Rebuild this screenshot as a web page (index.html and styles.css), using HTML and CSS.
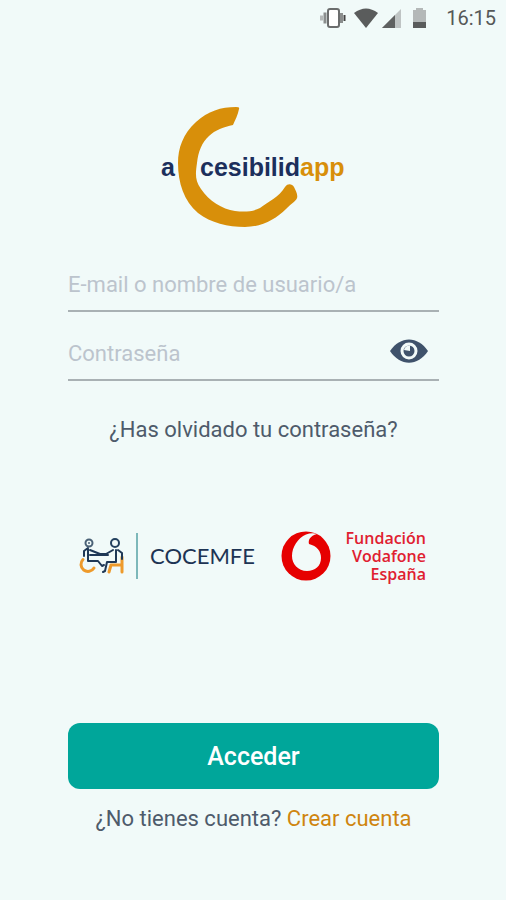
FILE: index.html
```
<!DOCTYPE html>
<html lang=es>
<head>
  <meta charset=utf-8>
  <title>accesibilidapp</title>
  <meta name=viewport content='width=device-width, initial-scale=1.0'>
  <link rel="stylesheet" href="styles.css">
</head>
<body>
  <header class=status>
    <svg class=status-icons width=108 height=22 viewBox="0 0 108 22" aria-hidden=true>
      <!-- vibrate -->
      <path d="M5 5.500v11M21.500 6v10" stroke=#8a8d8d stroke-width=3 />
      <path d="M1.500 8.500v5" stroke=#b4b8b8 stroke-width=3 />
      <rect x=8 y=2 width=11 height=18 rx=2 fill=#fff stroke=#6b6d6d stroke-width=2 />
      <path d="M24.500 8v6" stroke=#444 stroke-width=2 />
      <!-- wifi -->
      <path d="M34 6q12-9 24 0L46 21z" fill=#5a5c5c />
      <!-- signal -->
      <path d="M62 21 81 2v19z" fill=#bfc4c4 />
      <path d="M62 21 75 8v13z" fill=#5f6161 />
      <!-- battery -->
      <path d="M93 3h3V1h7v2h3v13H93z" fill=#b4b8b8 />
      <path d="M93 15h13v6H93z" fill=#5a5c5c />
    </svg>
    <time>16:15</time>
  </header>

  <main class=login>
    <svg class=brand viewBox="160 105 188 124" role=img aria-label=accesibilidapp>
      <path class=brand-c d="M239 110Q240 108 236 108C221 108 208 112 196 123C183 135 178 149 178 164C178 184 184 202 198 214C211 224 228 228 245 228C262 228 276 220 286 210C291 205 296 202 297 199C298 196 296 192 294 188C292 185 288 184 285 188C279 198 268 203 260 209C252 213 244 213 235 212C222 210 209 202 201 190C194 181 196 172 197 164C198 153 202 143 209 137C215 131 224 128 233 126C235 121 238 116 239 110Z"/>
      <text x=161 y=177>a</text>
      <text x=200 y=177>cesibilid<tspan class=brand-app>app</tspan></text>
    </svg>

    <form class=form>
      <div class=field>
        <input type=text name=user aria-label="E-mail o nombre de usuario/a" placeholder="E-mail o nombre de usuario/a">
      </div>
      <div class=field>
        <input type=password name=password aria-label="Contraseña" placeholder="Contraseña">
        <button class=eye type=button aria-label="Mostrar contraseña">
          <svg width=40 height=24 viewBox="0 0 40 24">
            <path d="M1 12C11-3.500 29-3.500 39 12C29 27.500 11 27.500 1 12Z" fill=#3f526b />
            <circle cx=20 cy=12 r=7 fill=#3f526b stroke=#f2faf9 stroke-width=3 />
            <path d="M21 12V6.500A5.500 5.500 0 0 0 15 11z" fill=#f2faf9 />
          </svg>
        </button>
      </div>
      <a class=forgot href=#>¿Has olvidado tu contraseña?</a>

      <div class=partners>
        <div class=cocemfe>
          <svg width=46 height=36 viewBox="0 0 46 36" fill=none stroke-linecap=round stroke-linejoin=round aria-hidden=true>
            <path d="M4 21.500A7 7 0 1 0 15 30" stroke=#ee9a2b stroke-width=3 />
            <path d="M30 34l2-7h10M43 19v15" stroke=#ee9a2b stroke-width=3 />
            <circle cx=10 cy=5 r=3.500 stroke=#4b6277 stroke-width=2 />
            <circle cx=10 cy=5 r=1 fill=#4b6277 />
            <circle cx=36 cy=5 r=4 stroke=#24415f stroke-width=2 />
            <path d="M9 10l-4 3M9 11v12h10l4 5 2-1M11 12l10 4h6l7-4M5 13v5" stroke=#1f3856 stroke-width=2 />
            <path d="M11 17h18M37 12v12h-9l-2 9-2 1M39 12l4 3v6" stroke=#1f3856 stroke-width=2 />
          </svg>
          <span class=cocemfe-name>COCEMFE</span>
        </div>
        <div class=vodafone>
          <svg width=50 height=50 viewBox="0 0 50 50" aria-hidden=true>
            <circle cx=25 cy=25 r=24.500 fill=#e60000 />
            <path d="M36 3C29 5 27 9 28 13C36 15 40 20 40 27C40 35 34 40 26 40C17 40 11 33 11 25C11 16 17 7 25 3.500C29 2 33 2 36 3Z" fill=#f2faf9 />
          </svg>
          <span class=vodafone-name>Fundación<br>Vodafone<br>España</span>
        </div>
      </div>

      <button class=submit type=submit>Acceder</button>
    </form>

    <p class=signup>¿No tienes cuenta? <a href=#>Crear cuenta</a></p>
  </main>
</body>
</html>
```

FILE: styles.css
```
* {
  box-sizing: border-box;
}

body {
  margin: 0;
  min-height: 100vh;
  background: #f1faf9;
  color: #4e5b6b;
  font: 22px/28px Roboto, sans-serif;
}

a {
  color: inherit;
  text-decoration: none;
}

/* status bar */

.status {
  display: flex;
  justify-content: flex-end;
  align-items: center;
  gap: 18px;
  height: 36px;
  padding: 0 10px;
  color: #555858;
  font-size: 20px;
}

/* login */

.login {
  padding: 68px 67px 0 68px;
}

.brand {
  display: block;
  width: 188px;
  margin: 0 auto;
  fill: #1c2f5c;
  font: bold 25px "Liberation Sans", sans-serif;
}

.brand-c,
.brand-app
{
  fill: #d88f0a;
}

.form {
  display: flex;
  flex-direction: column;
  padding-top: 32px;
}

.field {
  display: flex;
  align-items: center;
  height: 52px;
  margin-bottom: 17px;
  border-bottom: 2px solid #a9b1b4;
}

.field input {
  flex: 1;
  min-width: 0;
  padding: 0;
  border: 0;
  outline: 0;
  background: none;
  color: inherit;
  font: inherit;
}

.field input::placeholder {
  color: #bcc4cd;
  opacity: 1;
}

.eye {
  display: flex;
  margin: 0 10px 6px 0;
  padding: 0;
  border: 0;
  background: none;
}

.forgot {
  align-self: center;
  margin-top: 18px;
}

/* partner logos */

.partners {
  display: flex;
  justify-content: space-between;
  align-items: center;
  margin: 85px 13px 140px 11px;
}

.cocemfe,
.vodafone
{
  display: flex;
  align-items: center;
}

.cocemfe {
  gap: 11px;
}

.cocemfe-name {
  padding-left: 12px;
  border-left: 2px solid #7db8ba;
  color: #1d3454;
  font: 22px/46px Lato, sans-serif;
}

.vodafone {
  gap: 15px;
}

.vodafone-name {
  color: #e02030;
  font: 600 16px/18px "Open Sans", sans-serif;
  text-align: right;
}

.submit {
  height: 66px;
  border: 0;
  border-radius: 12px;
  background: #00a69a;
  color: #fff;
  font: 500 25px Roboto, sans-serif;
}

.signup {
  margin: 16px 0;
  text-align: center;
}

.signup a {
  color: #cf850f;
}
```
